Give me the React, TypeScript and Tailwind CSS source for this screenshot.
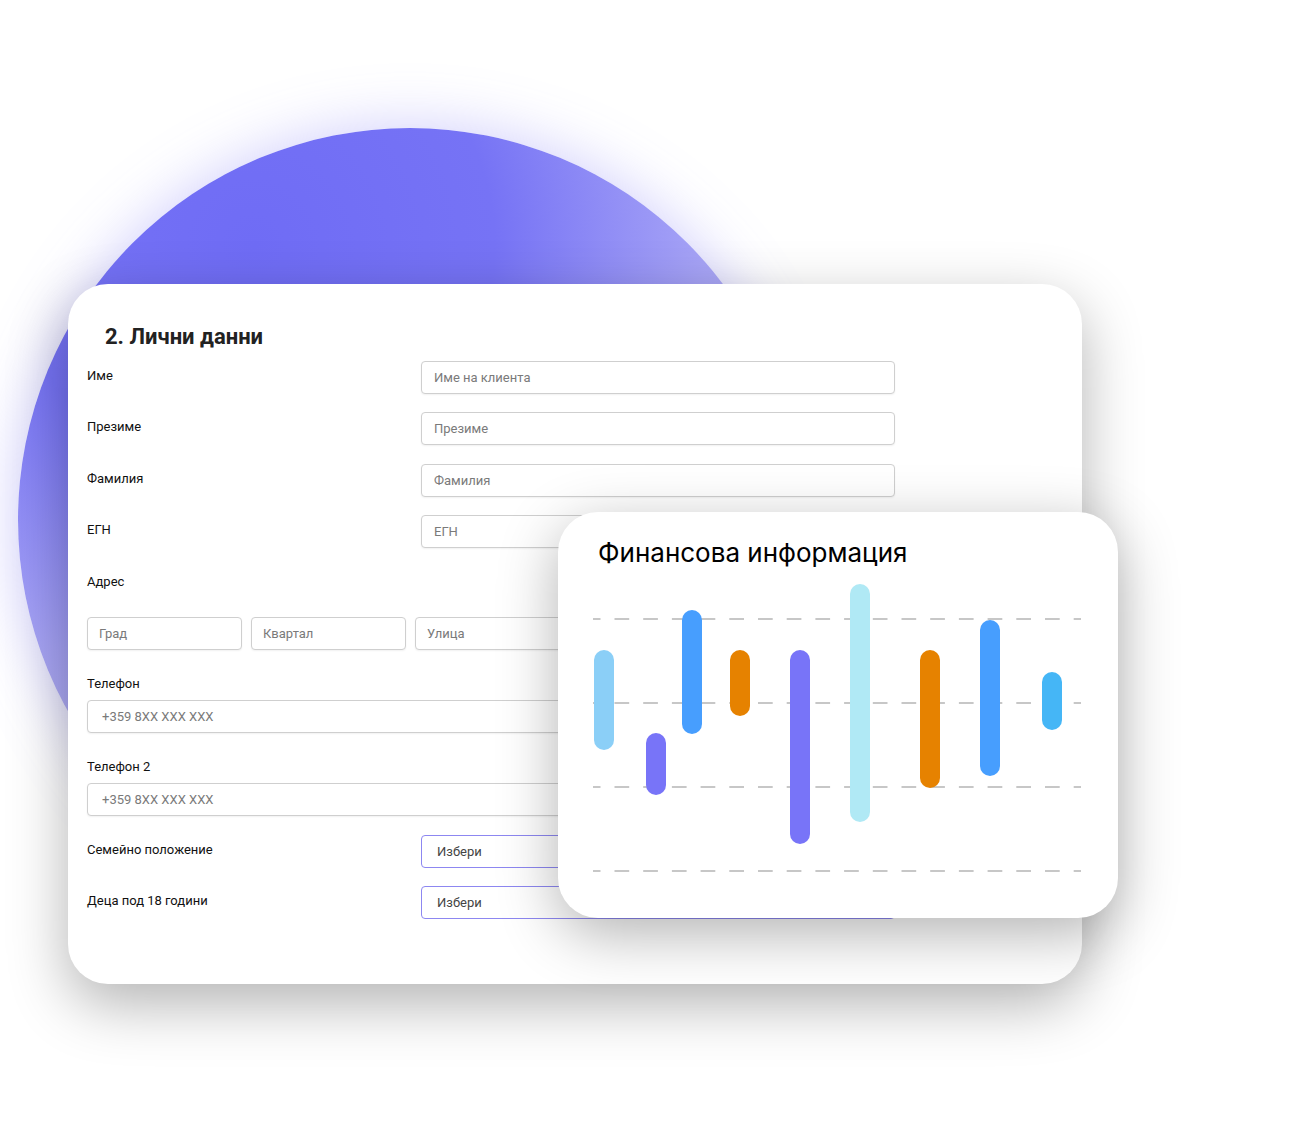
import React from "react";

const rows = [
  { label: "Име", placeholder: "Име на клиента" },
  { label: "Презиме", placeholder: "Презиме" },
  { label: "Фамилия", placeholder: "Фамилия" },
  { label: "ЕГН", placeholder: "ЕГН" },
];

// bars in page coordinates: x, top, bottom, colour
const bars = [
  { x: 594, y1: 650, y2: 750, c: "#8bcff7" },
  { x: 646, y1: 733, y2: 795, c: "#7874f8" },
  { x: 682, y1: 610, y2: 734, c: "#479efe" },
  { x: 730, y1: 650, y2: 716, c: "#e68200" },
  { x: 790, y1: 650, y2: 844, c: "#7874f8" },
  { x: 850, y1: 584, y2: 822, c: "#b0e9f5" },
  { x: 920, y1: 650, y2: 788, c: "#e68200" },
  { x: 980, y1: 620, y2: 776, c: "#479efe" },
  { x: 1042, y1: 672, y2: 730, c: "#45b6f6" },
];

const gridLines = [619, 703, 787, 871];

const labelCls = "text-[13px] leading-[16px] font-normal text-[#111]";

function TextInput({ placeholder, className }: { placeholder: string; className?: string }) {
  return (
    <input
      readOnly
      placeholder={placeholder}
      className={
        "h-[33px] rounded-[4px] border border-[#cfcfcf] bg-white text-[13px] text-[#333] placeholder:text-[#7a7a7a] shadow-[0_1px_2px_rgba(0,0,0,0.06)] outline-none " +
        (className || "")
      }
    />
  );
}

function SelectBox() {
  return (
    <div className="h-[33px] w-[474px] rounded-[4px] border border-[#8d87f1] bg-white pl-[15px] flex items-center text-[13px] text-[#444]">
      Избери
    </div>
  );
}

function FinanceCard() {
  return (
    <div className="absolute left-[558px] top-[512px] w-[560px] h-[406px] rounded-[40px] bg-white shadow-[0_16px_60px_rgba(0,0,0,0.3)] flex flex-col">
      <h2 className="pt-[25px] pl-[40px] text-[26px] leading-[32px] font-normal text-black font-['Inter',sans-serif]">
        Финансова информация
      </h2>
      <svg className="mt-[6px]" width={560} height={305} viewBox="558 575 560 305">
        {gridLines.map((y) => (
          <line
            key={y}
            x1={593}
            x2={1081}
            y1={y}
            y2={y}
            stroke="#c7c7c7"
            strokeWidth={2}
            strokeDasharray="14.7 14"
            strokeDashoffset={7.2}
          />
        ))}
        {bars.map((b, i) => (
          <rect key={i} x={b.x} y={b.y1} width={20} height={b.y2 - b.y1} rx={10} fill={b.c} />
        ))}
      </svg>
    </div>
  );
}

export default function App() {
  return (
    <div className="relative w-[1298px] h-[1122px] overflow-hidden bg-white pt-[284px] pl-[68px] font-['Roboto',sans-serif]">
      {/* purple disc behind the cards */}
      <div className="absolute left-[18px] top-[128px] w-[784px] h-[784px] rounded-full bg-[radial-gradient(circle_at_30%_15%,#6f6cf5_0%,#7673f5_28%,#a6a3f6_52%,#cbc9f5_80%,#dcdaf5_100%)] shadow-[0_0_60px_rgba(115,110,245,0.35)]" />

      <div className="relative w-[1014px] h-[700px] rounded-[40px] bg-white shadow-[0_20px_60px_rgba(0,0,0,0.3)]">
        <div className="absolute inset-0 pl-[19px] pt-[41px]">
          <h1 className="ml-[18px] text-[22px] leading-[24px] font-bold text-[#222]">2. Лични данни</h1>

          <div className="mt-[12px] flex flex-col gap-[18.3px]">
            {rows.map((r) => (
              <div key={r.label} className="flex items-center">
                <span className={"w-[334px] -mt-[3px] " + labelCls}>{r.label}</span>
                <TextInput placeholder={r.placeholder} className="w-[474px] pl-[12px]" />
              </div>
            ))}
          </div>

          <div className={"mt-[26px] " + labelCls}>Адрес</div>
          <div className="mt-[27px] flex gap-[9px]">
            <TextInput placeholder="Град" className="w-[155px] pl-[11px]" />
            <TextInput placeholder="Квартал" className="w-[155px] pl-[11px]" />
            <TextInput placeholder="Улица" className="w-[155px] pl-[11px]" />
          </div>

          <div className={"mt-[26px] " + labelCls}>Телефон</div>
          <TextInput placeholder="+359 8XX XXX XXX" className="mt-[8px] w-[808px] pl-[14px] block" />

          <div className={"mt-[26px] " + labelCls}>Телефон 2</div>
          <TextInput placeholder="+359 8XX XXX XXX" className="mt-[8px] w-[808px] pl-[14px] block" />

          <div className="mt-[19px] flex items-center">
            <span className={"w-[334px] -mt-[2px] " + labelCls}>Семейно положение</span>
            <SelectBox />
          </div>
          <div className="mt-[18px] flex items-center">
            <span className={"w-[334px] -mt-[2px] " + labelCls}>Деца под 18 години</span>
            <SelectBox />
          </div>
        </div>
      </div>

      <FinanceCard />
    </div>
  );
}
